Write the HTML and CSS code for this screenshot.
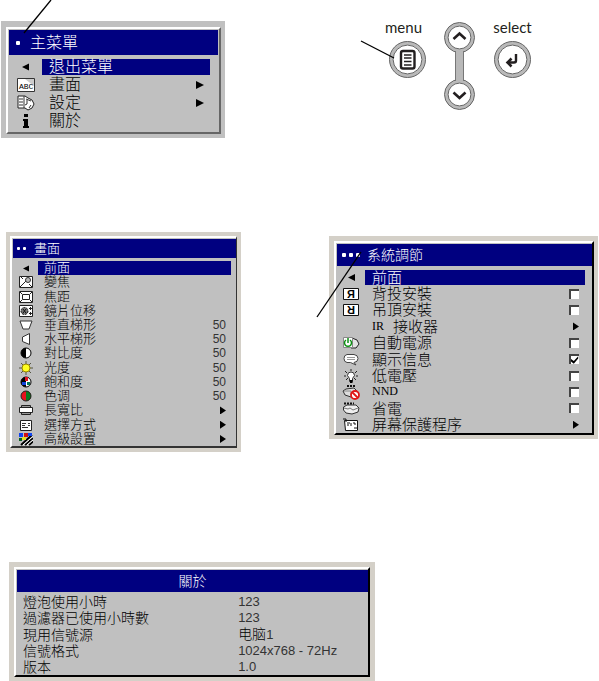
FILE: index.html
```
<!DOCTYPE html>
<html lang="zh-Hant">
<head>
<meta charset="utf-8">
<meta name="viewport" content="width=device-width, initial-scale=1">
<title>主菜單</title>
<link rel="stylesheet" href="styles.css">
</head>
<body>
<main class="page">

<section class="row row-main">
  <nav class="panel panel-main">
    <div class="frame">
      <h2 class="title"><span class="dots"><i></i></span>主菜單</h2>
      <ul class="list">
        <li><button class="item current" type="button"><span class="icon"><svg width="18" height="16" viewBox="0 0 18 16"><path d="M5 8 12 4.500V11.500Z"/></svg></span><span class="label">退出菜單</span></button></li>
        <li><button class="item" type="button"><span class="icon"><svg width="18" height="16" viewBox="0 0 18 16"><path d="M.5 1.500H17.500V14.500H.5Z" fill="#fff" stroke="#333"/><path d="M8 2H17V9Z" fill="#ccc"/><text x="2" y="12" font-size="8" class="tiny">ABC</text></svg></span><span class="label">畫面<span class="arrow"></span></span></button></li>
        <li><button class="item" type="button"><span class="icon"><svg width="18" height="16" viewBox="0 0 18 16"><path d="M1 1H8L11 3 15 5 17 9 15 13 11 15 8 13H1Z" fill="#fff" stroke="#222"/><path d="M7 1V13M2 4H6M2 7H6M2 10H6M9 4 14 6M10 5V9L8 10M14 10 12 13" fill="none" stroke="#333"/></svg></span><span class="label">設定<span class="arrow"></span></span></button></li>
        <li><button class="item" type="button"><span class="icon"><svg width="18" height="16" viewBox="0 0 18 16"><path d="M7 1H11V4H7ZM6 6H11V13H12V15H6V13H7V8H6Z"/></svg></span><span class="label">關於</span></button></li>
      </ul>
    </div>
  </nav>
  <div class="keypad">
    <div class="key key-menu">
      <label for="key-menu">menu</label>
      <button id="key-menu" class="round" type="button"><svg width="37" height="37" viewBox="0 0 37 37"><circle cx="18.500" cy="18.500" r="16.200" class="ring"/><circle cx="18.500" cy="18.500" r="18" class="edge"/><circle cx="18.500" cy="18.500" r="14.400" class="edge"/><rect x="12" y="10" width="13.500" height="17.500" rx="2" fill="none" stroke="#231f20" stroke-width="2.400"/><path d="M15 14H22.500M15 17H22.500M15 20.500H22.500M15 24H22.500" stroke="#231f20" stroke-width="1.300"/></svg></button>
    </div>
    <div class="rocker">
      <button class="round" type="button" aria-label="up"><svg width="31" height="31" viewBox="0 0 31 31"><circle cx="15.500" cy="15.500" r="13.200" class="ring"/><circle cx="15.500" cy="15.500" r="15" class="edge"/><circle cx="15.500" cy="15.500" r="11.400" class="edge"/><path d="M9.500 17 15.500 11.500 21.500 17" class="chevron"/></svg></button>
      <span class="stem"></span>
      <button class="round" type="button" aria-label="down"><svg width="31" height="31" viewBox="0 0 31 31"><circle cx="15.500" cy="15.500" r="13.200" class="ring"/><circle cx="15.500" cy="15.500" r="15" class="edge"/><circle cx="15.500" cy="15.500" r="11.400" class="edge"/><path d="M9.500 13.500 15.500 19 21.500 13.500" class="chevron"/></svg></button>
    </div>
    <div class="key">
      <label for="key-select">select</label>
      <button id="key-select" class="round" type="button"><svg width="37" height="37" viewBox="0 0 37 37"><circle cx="18.500" cy="18.500" r="16.200" class="ring"/><circle cx="18.500" cy="18.500" r="18" class="edge"/><circle cx="18.500" cy="18.500" r="14.400" class="edge"/><path d="M22 13V19.500Q22 21.500 20 21.500H15" fill="none" stroke="#231f20" stroke-width="2.400"/><path d="M17.500 17.500 13.500 21.500 17.500 25.500" fill="none" stroke="#231f20" stroke-width="2.600"/></svg></button>
    </div>
  </div>
  <svg class="pointer pointer-main" width="30" height="36" viewBox="0 0 30 36"><path d="M28 0 1 33"/></svg>
  <svg class="pointer pointer-key" width="36" height="20" viewBox="0 0 36 20"><path d="M1 1 34 18"/></svg>
</section>

<section class="row row-sub">
  <nav class="panel panel-picture">
    <div class="frame">
      <h2 class="title"><span class="dots"><i></i><i></i></span>畫面</h2>
      <ul class="list">
        <li><button class="item current" type="button"><span class="icon"><svg width="14" height="14" viewBox="0 0 14 14"><path d="M4 7.500 10 4.500V10.500Z"/></svg></span><span class="label">前面</span></button></li>
        <li><button class="item" type="button"><span class="icon"><svg width="14" height="14" viewBox="0 0 14 14"><path d="M.5 1.500H13.500V12.500H.5Z" fill="#fff" stroke="#222"/><path d="M1 12 8 5M2 2 4 4M10 9 13 12" stroke="#222"/><circle cx="9" cy="5" r="2.500" fill="#bbb" stroke="#333"/></svg></span><span class="label">變焦</span></button></li>
        <li><button class="item" type="button"><span class="icon"><svg width="14" height="14" viewBox="0 0 14 14"><path d="M.5 1.500H13.500V12.500H.5Z" fill="#fff" stroke="#222"/><path d="M3.500 4.500H10.500V9.500H3.500ZM1 2 3 4M13 2 11 4M1 12 3 10M13 12 11 10" fill="none" stroke="#222"/></svg></span><span class="label">焦距</span></button></li>
        <li><button class="item" type="button"><span class="icon"><svg width="14" height="14" viewBox="0 0 14 14"><path d="M.5 1.500H13.500V12.500H.5Z" fill="#fff" stroke="#222"/><circle cx="5.500" cy="7" r="3.500" fill="#777" stroke="#111" stroke-dasharray="2 1"/><path d="M4 5 7 9M7 5 4 9" stroke="#111"/><path d="M11.500 3V6M11.500 8V11M10 4.500H13M10 9.500H13" stroke="#222"/></svg></span><span class="label">鏡片位移</span></button></li>
        <li><button class="item" type="button"><span class="icon"><svg width="14" height="14" viewBox="0 0 14 14"><path d="M1 3H13L10 11H4Z" fill="#fff" stroke="#333"/></svg></span><span class="label">垂直梯形<span class="value">50</span></span></button></li>
        <li><button class="item" type="button"><span class="icon"><svg width="14" height="14" viewBox="0 0 14 14"><path d="M10.500 1.500V12.500L3.500 9.500V5Z" fill="#fff" stroke="#333"/></svg></span><span class="label">水平梯形<span class="value">50</span></span></button></li>
        <li><button class="item" type="button"><span class="icon"><svg width="14" height="14" viewBox="0 0 14 14"><circle cx="7" cy="7" r="5" fill="#fff" stroke="#000"/><path d="M7 2A5 5 0 0 0 7 12Z"/></svg></span><span class="label">對比度<span class="value">50</span></span></button></li>
        <li><button class="item" type="button"><span class="icon"><svg width="14" height="14" viewBox="0 0 14 14"><path d="M7 0V14M0 7H14M2 2 12 12M12 2 2 12" stroke="#554"/><circle cx="7" cy="7" r="4" fill="#ffff20" stroke="#998400"/></svg></span><span class="label">光度<span class="value">50</span></span></button></li>
        <li><button class="item" type="button"><span class="icon"><svg width="14" height="14" viewBox="0 0 14 14"><circle cx="7" cy="7" r="5" fill="#fff" stroke="#000"/><path d="M7 2A5 5 0 0 0 7 12Z"/><path d="M6 2H9V6H6Z" fill="#e01020"/><path d="M3 7H7V10H3Z" fill="#14d"/><path d="M8 7H11V10H8Z" fill="#075"/></svg></span><span class="label">飽和度<span class="value">50</span></span></button></li>
        <li><button class="item" type="button"><span class="icon"><svg width="14" height="14" viewBox="0 0 14 14"><circle cx="7" cy="7" r="5" fill="#e8101c"/><path d="M7 2A5 5 0 0 1 7 12Z" fill="#087a20"/><circle cx="7" cy="7" r="5" fill="none" stroke="#222"/></svg></span><span class="label">色调<span class="value">50</span></span></button></li>
        <li><button class="item" type="button"><span class="icon"><svg width="14" height="14" viewBox="0 0 14 14"><path d="M2.500 2.500H11.500V11.500H2.500Z" fill="#999" stroke="#222"/><path d="M.5 4.500H13.500V9.500H.5Z" fill="#fff" stroke="#222"/></svg></span><span class="label">長寬比<span class="arrow"></span></span></button></li>
        <li><button class="item" type="button"><span class="icon"><svg width="14" height="14" viewBox="0 0 14 14"><path d="M1.500 2.500H12.500V12.500H1.500Z" fill="#fff" stroke="#222"/><path d="M3 5.500H7M3 7.500H6M3 9.500H9M9 5.500H11M9 7.500H11" stroke="#333"/></svg></span><span class="label">選擇方式<span class="arrow"></span></span></button></li>
        <li><button class="item" type="button"><span class="icon"><svg width="14" height="14" viewBox="0 0 14 14"><path d="M2 13 13 3M6 13 14 6M10 13 14 9.500" stroke="#000" stroke-width="2"/><path d="M4 13 14 4.500M8 13 14 8" stroke="#fff"/><path d="M0 1H4V5H0Z" fill="#14e"/><path d="M9 1H13V4H9Z" fill="#14e"/><path d="M5 1H9V5H5Z" fill="#d01010"/><path d="M3 5H7V8H3Z" fill="#e8e020"/><path d="M0 6H3V9H0Z" fill="#086020"/></svg></span><span class="label">高級設置<span class="arrow"></span></span></button></li>
      </ul>
    </div>
  </nav>

  <nav class="panel panel-system">
    <div class="frame">
      <h2 class="title"><span class="dots"><i></i><i></i><i></i></span>系統調節</h2>
      <ul class="list">
        <li><button class="item current" type="button"><span class="icon"><svg width="18" height="16" viewBox="0 0 18 16"><path d="M6 8.500 13 5V12Z"/></svg></span><span class="label">前面</span></button></li>
        <li><label class="item"><span class="icon"><svg width="18" height="16" viewBox="0 0 18 16"><path d="M1.500 2.500H16.500V13.500H1.500Z" fill="#fff" stroke="#111"/><text x="5" y="12" font-size="11" class="letter">Я</text></svg></span><span class="label">背投安裝<input type="checkbox"></span></label></li>
        <li><label class="item"><span class="icon"><svg width="18" height="16" viewBox="0 0 18 16"><path d="M1.500 2.500H16.500V13.500H1.500Z" fill="#fff" stroke="#111"/><text x="5" y="12" font-size="11" class="letter" transform="rotate(180 9 8)">R</text></svg></span><span class="label">吊頂安裝<input type="checkbox"></span></label></li>
        <li><button class="item" type="button"><span class="icon"></span><span class="label"><span class="latin prefix">IR</span>接收器<span class="arrow"></span></span></button></li>
        <li><label class="item"><span class="icon"><svg width="18" height="16" viewBox="0 0 18 16"><path d="M10 3 15 5 17 9 14 13H9Z" fill="#e4e4e4" stroke="#222"/><path d="M1.500 2.500H10.500V12.500H1.500Z" fill="#fff" stroke="#888"/><path d="M4 5A3.500 3.500 0 1 0 8 5M6 3V8" fill="none" stroke="#0a9010" stroke-width="1.500"/></svg></span><span class="label">自動電源<input type="checkbox"></span></label></li>
        <li><label class="item"><span class="icon"><svg width="18" height="16" viewBox="0 0 18 16"><path d="M5 3.500H12Q16 4 16 7.500T12 11.500L14 14 8.500 11.500H5Q2 11 2 7.500T5 3.500Z" fill="#fff" stroke="#444"/><path d="M5 6.500H13M5 8.500H13" stroke="#999"/></svg></span><span class="label">顯示信息<input type="checkbox" checked></span></label></li>
        <li><label class="item"><span class="icon"><svg width="18" height="16" viewBox="0 0 18 16"><path d="M9 1V3M3 3 5 5M15 3 13 5M2 8H4M14 8H16M4 12 6 10M14 12 12 10" stroke="#222"/><path d="M9 4Q12.500 4 12.500 7.500L10.500 10.500V13.500H7.500V10.500L5.500 7.500Q5.500 4 9 4Z" fill="#fff" stroke="#333"/><path d="M8 12H10.500V15H8Z"/></svg></span><span class="label">低電壓<input type="checkbox"></span></label></li>
        <li><label class="item"><span class="icon"><svg width="18" height="16" viewBox="0 0 18 16"><path d="M1 7 4 5 12 4 15 7 14 11 9 13 3 11Z" fill="#ddd" stroke="#333"/><path d="M5 2H13" stroke="#111" stroke-width="2" stroke-dasharray="2 1"/><path d="M2 7H9V11" fill="none" stroke="#888"/><circle cx="13" cy="11" r="4" fill="#fff" stroke="#e01818" stroke-width="1.800"/><path d="M10 8 16 14" stroke="#e01818" stroke-width="1.800"/></svg></span><span class="label"><span class="latin">NND</span><input type="checkbox"></span></label></li>
        <li><label class="item"><span class="icon"><svg width="18" height="16" viewBox="0 0 18 16"><path d="M1.500 7 5 5 14 5 17 8 16 12 10 14 4 13 1.500 10Z" fill="#eee" stroke="#333"/><path d="M2 3.500H12" stroke="#111" stroke-width="2" stroke-dasharray="2 1"/><path d="M2 8 6 9 8 8 11 10 16 8" fill="none" stroke="#777"/></svg></span><span class="label">省電<input type="checkbox"></span></label></li>
        <li><button class="item" type="button"><span class="icon"><svg width="18" height="16" viewBox="0 0 18 16"><path d="M2.500 3.500H15.500V13.500H3.500Z" fill="#fff" stroke="#111"/><path d="M1 2H4V5M5 6H8M5 8H7M9 6V9M11 6H13V8M12 11H15" fill="none" stroke="#111"/></svg></span><span class="label">屏幕保護程序<span class="arrow"></span></span></button></li>
      </ul>
    </div>
  </nav>
  <svg class="pointer pointer-system" width="48" height="68" viewBox="0 0 48 68"><path d="M1 66 45 1"/></svg>
</section>

<section class="row row-about">
  <div class="panel panel-about">
    <div class="frame">
      <h2 class="title">關於</h2>
      <table>
        <tbody>
          <tr><th scope="row">燈泡使用小時</th><td>123</td></tr>
          <tr><th scope="row">過濾器已使用小時數</th><td>123</td></tr>
          <tr><th scope="row">現用信號源</th><td><span class="source">电脑</span>1</td></tr>
          <tr><th scope="row">信號格式</th><td>1024x768 - 72Hz</td></tr>
          <tr><th scope="row">版本</th><td>1.0</td></tr>
        </tbody>
      </table>
    </div>
  </div>
</section>

</main>
</body>
</html>
```
FILE: styles.css
```
* { box-sizing: border-box; }

body {
  margin: 0;
  background: #fff;
  color: #000;
  font-family: "Liberation Sans", "Noto Sans CJK TC", sans-serif;
  font-weight: 300;
}

.row {
  position: relative;
  display: grid;
  align-items: start;
}

.row-main {
  grid-template-columns: 224fr 159fr 215fr;
  padding: 19px 0 0 1px;
}

.row-sub {
  grid-template-columns: 235fr 88fr 269fr;
  margin-top: 94px;
  padding: 0 1px 0 6px;
}

.row-about {
  grid-template-columns: 366fr 224fr;
  margin-top: 110px;
  padding-left: 9px;
}

/* On-screen menu windows */
.panel {
  background: #d4d0c8;
  padding: 5px;
}

.frame {
  background: #c0c0c0;
  border: 2px solid #fff;
  border-right-color: #333;
  border-bottom-color: #333;
  padding: 1px 0 0 1px;
}

.title {
  display: flex;
  align-items: center;
  margin: 0;
  background: #000080;
  color: #fff;
  font-weight: 300;
}

.dots {
  display: flex;
  flex: none;
}

.dots i {
  background: #fff;
  border-radius: 1px;
}

.list {
  display: grid;
  grid-auto-rows: 1fr;
  margin: 0;
  padding: 0;
  list-style: none;
}

.item {
  display: flex;
  align-items: center;
  width: 100%;
  height: 100%;
  margin: 0;
  padding: 0;
  border: 0;
  background: none;
  color: inherit;
  font: inherit;
  text-align: left;
}

.icon {
  display: flex;
  flex: none;
  justify-content: center;
}

.icon svg { display: block; }

.tiny {
  font-family: "Liberation Mono", monospace;
  font-weight: 400;
}

.letter {
  font-family: "Liberation Sans", sans-serif;
  font-weight: 700;
}

.label {
  display: flex;
  flex: 1;
  align-items: center;
  padding: 0 6px;
}

.current .label {
  background: #000080;
  color: #fff;
}

.value,
.arrow,
.label input { margin-left: auto; }

.arrow {
  width: 6px;
  height: 8px;
  background: #000;
  clip-path: polygon(0 0, 100% 50%, 0 100%);
}

.latin {
  font-family: "Liberation Serif", serif;
  font-size: 12px;
}

.prefix { padding-right: 9px; }

.label input {
  appearance: none;
  flex: none;
  width: 10px;
  height: 10px;
  margin-top: 0;
  margin-right: 0;
  margin-bottom: 0;
  background: #fff;
  border-top: 2px solid #444;
  border-left: 2px solid #444;
}

.label input:checked::after {
  content: "";
  display: block;
  width: 8px;
  height: 8px;
  background: #000;
  clip-path: polygon(0 35%, 35% 60%, 90% 0, 90% 30%, 35% 95%, 0 65%);
}

/* Main menu */
.panel-main {
  margin-top: 2px;
  padding: 6px 4px 4px 5px;
  background: #c0c0c0;
}

.panel-main .frame {
  padding: 1px 1px 2px 1px;
  border-right-color: #666;
  border-bottom-color: #666;
}

.panel-main .title {
  height: 25px;
  margin-bottom: 3px;
  padding-left: 7px;
  gap: 10px;
  font-size: 16px;
  line-height: 24px;
}

.panel-main .dots i {
  width: 4px;
  height: 4px;
}

.panel-main .list {
  margin-right: 8px;
  font-size: 16px;
  line-height: 16px;
}

.panel-main li { height: 18px; }
.panel-main .icon { width: 33px; }
.panel-main .label { padding-left: 7px; }
.panel-main .arrow { width: 8px; }

/* Picture menu */
.panel-picture { padding: 4px; }

.panel-picture .frame {
  border-right-width: 1px;
}

.panel-picture .title {
  height: 19px;
  margin-bottom: 3px;
  padding-left: 4px;
  gap: 8px;
  font-size: 13px;
  line-height: 19px;
}

.panel-picture .dots { gap: 3px; }

.panel-picture .dots i {
  width: 3px;
  height: 3px;
}

.panel-picture .list {
  min-height: 185px;
  margin-right: 5px;
  font-size: 13px;
  line-height: 14px;
}

.panel-picture .icon { width: 25px; }
.panel-picture .label { padding-right: 5px; }

.panel-picture .value {
  font-size: 12px;
  color: #333;
}

/* System menu */
.panel-system {
  grid-column: 3;
  margin-top: 4px;
  padding: 5px 4px 4px 5px;
}

.panel-system .frame {
  border-right-color: #000;
  border-bottom-color: #000;
}

.panel-system .title {
  height: 22px;
  margin-bottom: 3px;
  padding-left: 5px;
  gap: 7px;
  font-size: 14px;
  line-height: 22px;
}

.panel-system .dots { gap: 3px; }

.panel-system .dots i {
  width: 4px;
  height: 4px;
}

.panel-system .list {
  min-height: 164px;
  margin-right: 7px;
  font-size: 15px;
  line-height: 15px;
}

.panel-system .icon { width: 28px; }
.panel-system .label { padding-left: 7px; }

/* About window */
.panel-about .frame {
  border-right-color: #000;
  border-bottom-color: #000;
}

.panel-about .title {
  justify-content: center;
  height: 22px;
  margin-bottom: 2px;
  font-size: 14px;
  line-height: 22px;
}

.panel-about table {
  width: 100%;
  border-collapse: collapse;
  font-size: 14px;
  line-height: 16px;
}

.panel-about th,
.panel-about td {
  height: 16px;
  padding: 0;
  font-weight: 300;
  text-align: left;
  vertical-align: middle;
}

.panel-about th {
  width: 63%;
  padding-left: 6px;
}

.panel-about td {
  color: #333;
  font-size: 13px;
}

.source {
  color: #000;
  font-size: 14px;
}

/* Keypad */
.keypad {
  display: flex;
  grid-column: 3;
  align-items: flex-start;
}

.key {
  display: flex;
  flex-direction: column;
  align-items: center;
  gap: 6px;
  width: 37px;
  color: #231f20;
  font-family: Lato, sans-serif;
  font-size: 15px;
  font-weight: 400;
  line-height: 16px;
}

.key-menu {
  align-items: flex-end;
  width: 42px;
}

.key-menu label { padding-right: 4px; }

.round {
  display: block;
  padding: 0;
  border: 0;
  border-radius: 50%;
  background: #fff;
}

.round svg { display: block; }

.ring {
  fill: none;
  stroke: #b9b9b9;
  stroke-width: 3.600;
}

.edge {
  fill: none;
  stroke: #666;
  stroke-width: 1;
}

.chevron {
  fill: none;
  stroke: #231f20;
  stroke-width: 2.600;
}

.rocker {
  display: flex;
  flex-direction: column;
  align-items: center;
  margin: 3px 19px 0 18px;
}

.stem {
  z-index: 1;
  width: 9px;
  height: 30px;
  margin: -2px 0;
  background: #b9b9b9;
  border: solid #777;
  border-width: 0 1px;
}

/* Callout lines drawn over the windows */
.pointer {
  position: absolute;
  z-index: 2;
  fill: none;
  stroke: #000;
  stroke-width: 1.300;
  pointer-events: none;
}

.pointer-main { left: 23px; top: 0; }
.pointer-key { left: 360px; top: 40px; }
.pointer-system { left: 316px; top: 19px; }
```
